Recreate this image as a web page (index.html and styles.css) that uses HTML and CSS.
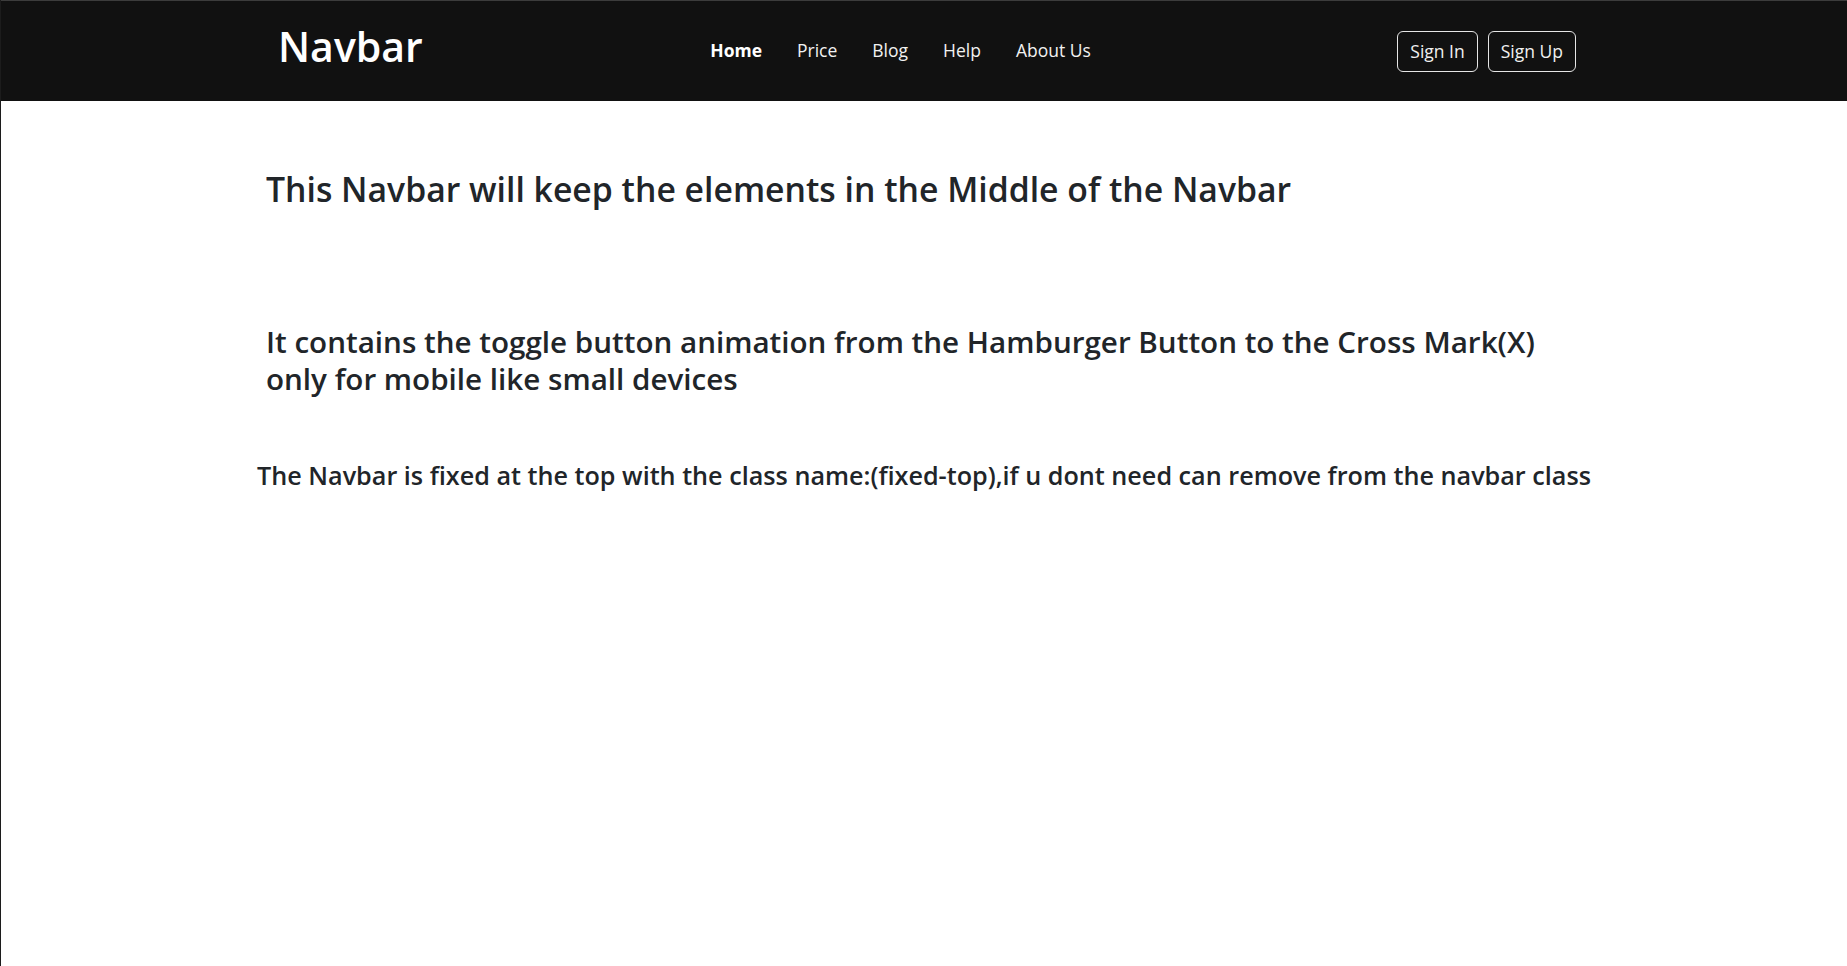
FILE: index.html
```html
<!DOCTYPE html>
<html lang="en">
<head>
<meta charset="utf-8">
<title>Navbar</title>
<link rel="stylesheet" href="styles.css">
</head>
<body>
<div class="page">
  <nav class="navbar">
    <div class="container nav-inner">
      <a class="brand" href="#">Navbar</a>
      <ul class="nav-links">
        <li><a class="nav-link active" href="#">Home</a></li>
        <li><a class="nav-link" href="#">Price</a></li>
        <li><a class="nav-link" href="#">Blog</a></li>
        <li><a class="nav-link" href="#">Help</a></li>
        <li><a class="nav-link" href="#">About Us</a></li>
      </ul>
      <div class="nav-buttons">
        <button class="btn">Sign In</button>
        <button class="btn">Sign Up</button>
      </div>
    </div>
  </nav>
  <main class="content">
    <h2 class="heading first">This Navbar will keep the elements in the Middle of the Navbar</h2>
    <h2 class="heading second">It contains the toggle button animation from the Hamburger Button to the Cross Mark(X) only for mobile like small devices</h2>
    <h4 class="note">The Navbar is fixed at the top with the class name:(fixed-top),if u dont need can remove from the navbar class</h4>
  </main>
</div>
</body>
</html>
```
FILE: styles.css
```css
* { box-sizing: border-box; }
html, body { margin: 0; padding: 0; }
body {
  font-family: "Open Sans", "Noto Sans", "DejaVu Sans", sans-serif;
  color: #212529;
  background: #fff;
}
.page {
  min-height: 100vh;
  border-left: 1px solid #1c1c1c;
}
.navbar {
  background: #111111;
  border-top: 1px solid #3c3c3c;
  height: 101px;
}
.container {
  max-width: 1320px;
  margin: 0 auto;
  padding: 0 12px;
}
.nav-inner {
  height: 100%;
  display: flex;
  align-items: center;
  justify-content: space-between;
}
.brand {
  color: #fff;
  text-decoration: none;
  font-size: 41px;
  font-weight: 600;
  margin-left: 2px;
  margin-top: -10px;
}
.nav-links {
  list-style: none;
  margin: -2px 19px 0 0;
  padding: 0;
  display: flex;
  gap: 35px;
}
.nav-link {
  color: #f2f2f2;
  text-decoration: none;
  font-size: 17.5px;
}
.nav-link.active {
  font-weight: 700;
  color: #fff;
}
.nav-buttons {
  display: flex;
  gap: 10px;
  margin-right: -4px;
}
.btn {
  font-family: inherit;
  background: transparent;
  color: #f0f0f0;
  border: 1px solid #e6e6e6;
  border-radius: 6px;
  height: 41px;
  padding: 0 12px;
  font-size: 17.5px;
}
.content {
  max-width: 1320px;
  margin: 0 auto;
  padding-top: 68px;
}
.heading {
  margin: 0;
  font-weight: 600;
  padding-left: 2px;
}
.heading.first {
  font-size: 33.75px;
  line-height: 40px;
}
.heading.second {
  font-size: 29.6px;
  line-height: 36.5px;
  margin-top: 115px;
  max-width: 1310px;
}
.note {
  margin: 63px -20px 0;
  text-align: center;
  font-size: 25.2px;
  font-weight: 600;
  line-height: 30px;
}
```
